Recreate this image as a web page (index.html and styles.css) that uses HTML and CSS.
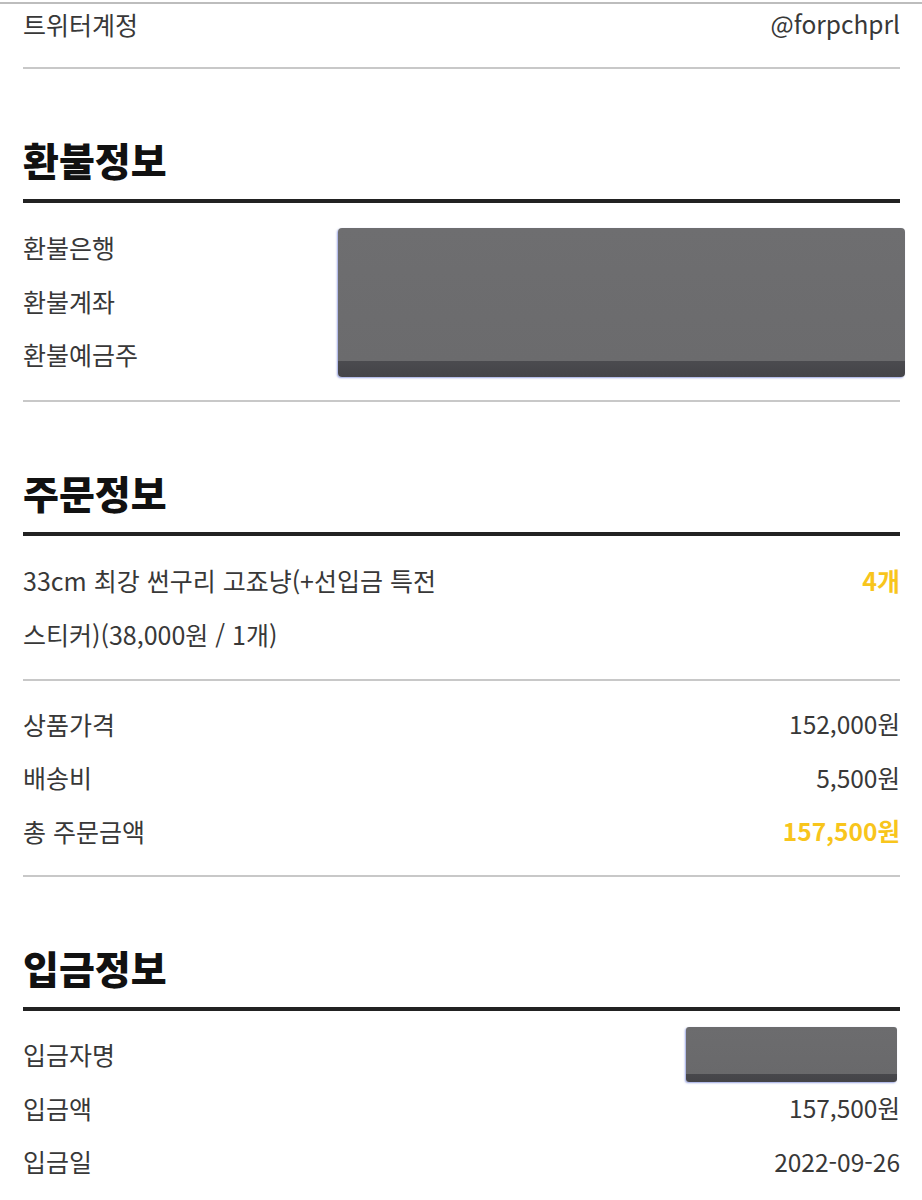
FILE: index.html
```html
<!DOCTYPE html>
<html lang="ko">
<head>
<meta charset="utf-8">
<title>주문 상세</title>
<link rel="stylesheet" href="styles.css">
</head>
<body>
<div class="top-rule"></div>
<main class="page">
  <div class="row row-first">
    <span class="label">트위터계정</span>
    <span class="value">@forpchprl</span>
  </div>
  <hr class="rule">

  <section class="section">
    <h2 class="heading">환불정보</h2>
    <hr class="rule-strong">
    <div class="rows masked">
      <div class="row"><span class="label">환불은행</span><span class="value"></span></div>
      <div class="row"><span class="label">환불계좌</span><span class="value"></span></div>
      <div class="row"><span class="label">환불예금주</span><span class="value"></span></div>
      <div class="redact redact-lg"></div>
    </div>
    <hr class="rule">
  </section>

  <section class="section">
    <h2 class="heading">주문정보</h2>
    <hr class="rule-strong">
    <div class="rows rows-product">
      <div class="product">
        <p class="product-name">33cm 최강 썬구리 고죠냥(+선입금 특전 스티커)(38,000원 / 1개)</p>
        <span class="qty">4개</span>
      </div>
    </div>
    <hr class="rule">
    <div class="rows">
      <div class="row"><span class="label">상품가격</span><span class="value">152,000원</span></div>
      <div class="row"><span class="label">배송비</span><span class="value">5,500원</span></div>
      <div class="row"><span class="label">총 주문금액</span><span class="value accent">157,500원</span></div>
    </div>
    <hr class="rule">
  </section>

  <section class="section">
    <h2 class="heading">입금정보</h2>
    <hr class="rule-strong">
    <div class="rows">
      <div class="row"><span class="label">입금자명</span><span class="redact redact-sm"></span></div>
      <div class="row"><span class="label">입금액</span><span class="value">157,500원</span></div>
      <div class="row"><span class="label">입금일</span><span class="value">2022-09-26</span></div>
    </div>
  </section>
</main>
</body>
</html>
```

FILE: styles.css
```css
* { box-sizing: border-box; }

html, body {
  margin: 0;
  padding: 0;
  background: #ffffff;
  overflow-x: hidden;
}

body {
  font-family: "Noto Sans CJK KR", "Noto Sans", sans-serif;
  font-size: 25px;
  color: #383838;
}

.top-rule {
  height: 2px;
  margin-top: 2px;
  background: #bdbdbd;
}

.page {
  padding: 0 22px 0 23px;
}

.row {
  display: flex;
  justify-content: space-between;
  align-items: center;
  height: 53.5px;
}

.row-first {
  height: 40px;
}

.label, .value {
  white-space: nowrap;
  line-height: 1;
}

.value {
  font-size: 24.5px;
}

.accent {
  color: #f8c51c;
  font-weight: 700;
}

.rule {
  border: 0;
  margin: 0;
  height: 2px;
  background: #c8c8c8;
}

.row-first + .rule {
  margin-top: 23px;
}

.rule-strong {
  border: 0;
  margin: 0;
  height: 4px;
  background: #222222;
}

.heading {
  margin: 65px 0 15px;
  font-size: 39px;
  line-height: 50px;
  font-weight: 900;
  color: #111111;
}

.rows {
  padding: 17px 0;
}

.masked {
  position: relative;
  padding: 18px 0;
}

.rows-product {
  padding: 17.5px 0;
}

.product {
  display: flex;
  justify-content: space-between;
  align-items: flex-start;
}

.product-name {
  margin: 0;
  max-width: 435px;
  line-height: 54px;
}

.qty {
  color: #f8c51c;
  font-weight: 700;
  line-height: 54px;
}

.redact {
  display: block;
  border-radius: 4px;
  background:
    linear-gradient(to bottom, #6e6e70 0, #6b6b6d 89%, #4b4b4f 89%, #444448 100%);
  box-shadow: -1px 1px 2px rgba(70, 90, 200, 0.55);
}

.redact-lg {
  position: absolute;
  left: 315px;
  right: -5px;
  top: 25px;
  height: 149px;
}

.redact-sm {
  width: 211px;
  height: 55px;
  margin-right: 3px;
  border-radius: 3px;
  background:
    linear-gradient(to bottom, #6c6c6e 0, #69696b 85%, #48484c 85%, #444448 100%);
}
```
